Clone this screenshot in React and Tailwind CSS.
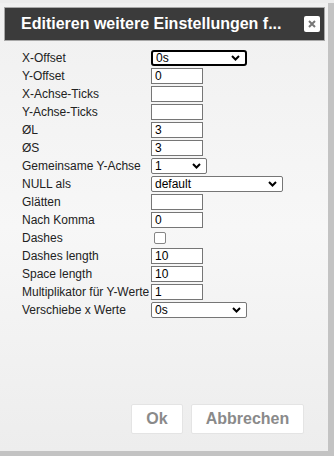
import React from 'react';

const font = { fontFamily: '"Liberation Sans", Arial, sans-serif' };

const Chevron = () => (
    <svg width="9" height="6" viewBox="0 0 9 6" className="shrink-0">
        <path d="M1 1 L4.5 4.5 L8 1" fill="none" stroke="#000" strokeWidth="2" />
    </svg>
);

const Select = ({ value, width, focused }) => (
    <div
        className={
            'flex items-center justify-between bg-white pl-[3px] pr-[5px] text-[12px] leading-none text-black ' +
            (focused
                ? 'h-[16px] border-2 border-black rounded-[3px]'
                : 'h-[16px] border border-[#767676] rounded-[2px]')
        }
        style={{ width }}
    >
        <span>{value}</span>
        <Chevron />
    </div>
);

const TextInput = ({ value }) => (
    <input
        defaultValue={value}
        className="h-[16px] w-[52px] border border-[#767676] bg-white px-[3px] text-[12px] leading-none text-black outline-none"
    />
);

const rows = [
    { label: 'X-Offset', el: <Select value="0s" width={96} focused /> },
    { label: 'Y-Offset', el: <TextInput value="0" /> },
    { label: 'X-Achse-Ticks', el: <TextInput value="" /> },
    { label: 'Y-Achse-Ticks', el: <TextInput value="" /> },
    { label: 'ØL', el: <TextInput value="3" /> },
    { label: 'ØS', el: <TextInput value="3" /> },
    { label: 'Gemeinsame Y-Achse', el: <Select value="1" width={56} /> },
    { label: 'NULL als', el: <Select value="default" width={132} /> },
    { label: 'Glätten', el: <TextInput value="" /> },
    { label: 'Nach Komma', el: <TextInput value="0" /> },
    {
        label: 'Dashes',
        el: <div className="ml-[3px] h-[12px] w-[12px] rounded-[2px] border border-[#858585] bg-white" />,
    },
    { label: 'Dashes length', el: <TextInput value="10" /> },
    { label: 'Space length', el: <TextInput value="10" /> },
    { label: 'Multiplikator für Y-Werte', el: <TextInput value="1" /> },
    { label: 'Verschiebe x Werte', el: <Select value="0s" width={96} /> },
];

export default function App() {
    return (
        <div className="h-[456px] w-[334px] overflow-hidden bg-[#c3c3c3]" style={font}>
            <div className="h-[3px] w-full bg-[#ececec]" />
            <div className="flex h-[448px] w-[328px] flex-col bg-gradient-to-b from-[#f0f0f0] via-[#f7f7f7] to-[#ededed] pl-[4px] pr-[3px] pt-[4px]">
                {/* title bar */}
                <div className="flex h-[34px] items-center justify-between border border-[#a8a8a8] bg-[#3b3b3b] pl-[16px] pr-[4px]">
                    <span className="text-[16px] font-bold text-white">
                        Editieren weitere Einstellungen f...
                    </span>
                    <div className="flex h-[16px] w-[16px] items-center justify-center rounded-[2px] bg-white">
                        <svg width="8" height="8" viewBox="0 0 8 8">
                            <path d="M1 1 L7 7 M7 1 L1 7" stroke="#777" strokeWidth="2" />
                        </svg>
                    </div>
                </div>

                {/* form */}
                <div className="flex flex-col pl-[18px] pt-[8px]">
                    {rows.map((r) => (
                        <div key={r.label} className="flex h-[18px] items-center">
                            <div className="w-[129px] whitespace-nowrap text-[12px] leading-none text-[#222]">{r.label}</div>
                            {r.el}
                        </div>
                    ))}
                </div>

                {/* buttons */}
                <div className="mt-auto mb-[17px] flex justify-end gap-[8px] pr-[21px]">
                    <button className="h-[30px] w-[52px] rounded-[2px] border border-[#e4e4e4] bg-white text-[16px] font-bold text-[#8a8a8a]">
                        Ok
                    </button>
                    <button className="h-[30px] w-[113px] rounded-[2px] border border-[#e4e4e4] bg-white text-[16px] font-bold text-[#8a8a8a]">
                        Abbrechen
                    </button>
                </div>
            </div>
        </div>
    );
}
